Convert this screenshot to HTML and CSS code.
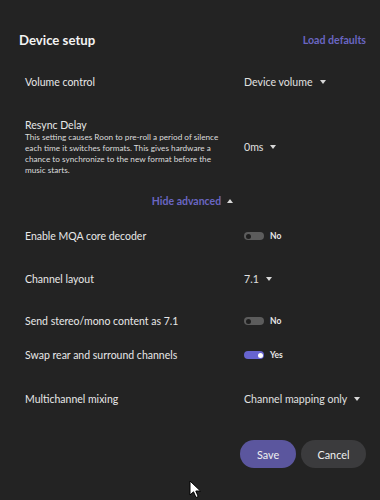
FILE: index.html
```html
<!DOCTYPE html>
<html>
<head>
<meta charset="utf-8">
<link rel="stylesheet" href="styles.css">
</head>
<body>
<div class="dialog">
  <div class="header">
    <h1 class="title">Device setup</h1>
    <a class="link">Load defaults</a>
  </div>
  <div class="list">
    <div class="row first">
      <div class="label">Volume control</div>
      <div class="value"><span>Device volume</span><span class="caret"></span></div>
    </div>
    <div class="row tall">
      <div class="label">
        <div class="label-title">Resync Delay</div>
        <div class="desc">This setting causes Roon to pre-roll a period of silence each time it switches formats. This gives hardware a chance to synchronize to the new format before the music starts.</div>
      </div>
      <div class="value"><span>0ms</span><span class="caret"></span></div>
    </div>
    <div class="advanced"><span>Hide advanced</span><span class="caret up"></span></div>
    <div class="row mqa">
      <div class="label">Enable MQA core decoder</div>
      <div class="value"><span class="toggle"><span class="knob"></span></span><span class="state">No</span></div>
    </div>
    <div class="row channel">
      <div class="label">Channel layout</div>
      <div class="value"><span>7.1</span><span class="caret"></span></div>
    </div>
    <div class="row">
      <div class="label">Send stereo/mono content as 7.1</div>
      <div class="value"><span class="toggle"><span class="knob"></span></span><span class="state">No</span></div>
    </div>
    <div class="row swap">
      <div class="label">Swap rear and surround channels</div>
      <div class="value"><span class="toggle on"><span class="knob"></span></span><span class="state">Yes</span></div>
    </div>
    <div class="row multi">
      <div class="label">Multichannel mixing</div>
      <div class="value"><span>Channel mapping only</span><span class="caret"></span></div>
    </div>
  </div>
  <div class="actions">
    <button class="btn primary">Save</button>
    <button class="btn secondary">Cancel</button>
  </div>
</div>
<svg class="cursor" width="13" height="19" viewBox="0 0 13 19">
  <path d="M1 1 L1 15 L4.5 11.8 L7 17.5 L9.2 16.5 L6.8 11 L11.5 11 Z" fill="#fff" stroke="#000" stroke-width="1"/>
</svg>
</body>
</html>
```
FILE: styles.css
```css
* { box-sizing: border-box; }
html, body {
  margin: 0;
  padding: 0;
  background: #232323;
  width: 380px;
  height: 500px;
  overflow: hidden;
  font-family: Lato, "Open Sans", sans-serif;
  color: #e6e6e6;
}
.dialog {
  position: relative;
  padding: 0 14px 0 19px;
}
.header {
  margin-top: 30px;
  height: 20px;
  display: flex;
  align-items: center;
  justify-content: space-between;
}
.title {
  margin: 0;
  font-size: 13.2px;
  font-weight: 700;
  color: #f2f2f2;
}
.link {
  font-size: 10.6px;
  font-weight: 700;
  color: #6a66c2;
}
.list {
  padding-left: 6px;
  display: flex;
  flex-direction: column;
}
.row {
  height: 42px;
  display: flex;
  align-items: center;
}
.row.first { margin-top: 11px; }
.row.tall {
  height: auto;
  padding: 15px 0 14px;
}
.row.mqa { margin-top: 3px; }
.row.channel { margin-top: 1px; }
.row.swap { margin-top: -8px; }
.row.multi { margin-top: 2px; }
.label {
  width: 219px;
  flex: none;
  font-size: 10.5px;
  color: #e8e8e8;
}
.label-title {
  line-height: 14px;
  font-size: 10.5px;
}
.desc {
  font-size: 8.2px;
  line-height: 11px;
  color: #dcdcdc;
  width: 205px;
}
.value {
  display: flex;
  align-items: center;
  white-space: nowrap;
  font-size: 10.6px;
  color: #e0e0e0;
}
.caret {
  width: 0;
  height: 0;
  margin-left: 7px;
  border-left: 3px solid transparent;
  border-right: 3px solid transparent;
  border-top: 4px solid #d8d8d8;
}
.caret.up {
  border-top: none;
  border-bottom: 4px solid #d8d8d8;
  margin-left: 6px;
}
.advanced {
  height: 22px;
  display: flex;
  align-items: center;
  justify-content: center;
  margin-left: -6px;
  font-size: 10.5px;
  font-weight: 700;
  color: #6a66c2;
}
.toggle {
  width: 20px;
  height: 8px;
  border-radius: 4px;
  background: #5c5c5c;
  display: flex;
  align-items: center;
  padding: 0 1.5px;
}
.knob {
  width: 5px;
  height: 5px;
  border-radius: 50%;
  background: #1f1f1f;
}
.toggle.on {
  background: #6764cf;
  justify-content: flex-end;
}
.toggle.on .knob { background: #ffffff; }
.state {
  margin-left: 6px;
  font-size: 8.5px;
  font-weight: 700;
  color: #e8e8e8;
}
.actions {
  margin-top: 20px;
  display: flex;
  justify-content: flex-end;
  gap: 5px;
}
.btn {
  height: 28px;
  border: none;
  border-radius: 14px;
  font-family: Lato, "Open Sans", sans-serif;
  font-size: 10.8px;
  color: #f0f0f0;
  padding: 0;
}
.btn.primary { width: 56px; background: #5b569e; }
.btn.secondary { width: 65px; background: #3b3b3d; }
.cursor {
  position: absolute;
  left: 189px;
  top: 480px;
}
```
